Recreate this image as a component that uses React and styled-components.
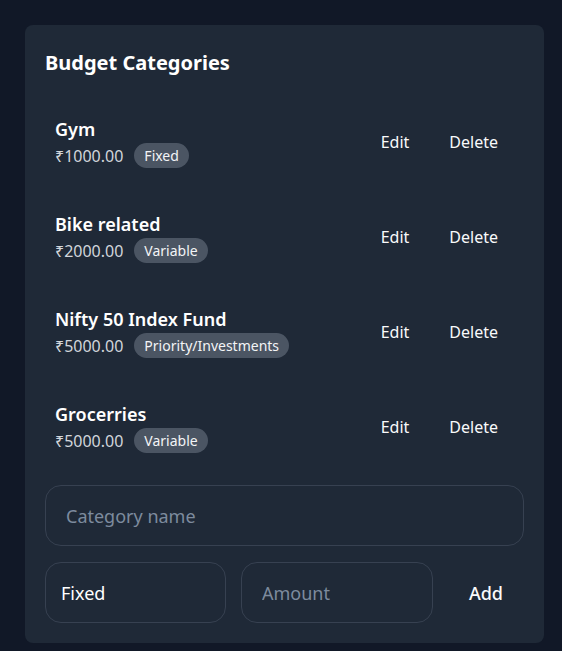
import React from "react"
import styled, { createGlobalStyle } from "styled-components"

const Global = createGlobalStyle`
  html, body {
    margin: 0;
    background: #111827;
    font-family: "Noto Sans", "Open Sans", sans-serif;
    color: #f9fafb;
  }
`

const Page = styled.main`
  padding: 25px;
  min-height: 100vh;
  box-sizing: border-box;
`

const Card = styled.section`
  width: 519px;
  box-sizing: border-box;
  background: #1f2937;
  border-radius: 8px;
  padding: 24px 20px 20px;
`

const Title = styled.h2`
  margin: 0 0 21px;
  font-size: 20px;
  line-height: 28px;
  font-weight: 700;
  color: #ffffff;
`

const List = styled.ul`
  list-style: none;
  margin: 0 0 15px;
  padding: 0;
  display: flex;
  flex-direction: column;
  gap: 8px;
`

const Row = styled.li`
  display: flex;
  align-items: center;
  justify-content: space-between;
  padding: 17px 10px;
`

const Name = styled.div`
  font-size: 18px;
  line-height: 28px;
  font-weight: 600;
  color: #ffffff;
`

const Meta = styled.div`
  display: flex;
  align-items: center;
  gap: 11px;
  height: 25px;
`

const Amount = styled.span`
  font-size: 16px;
  line-height: 24px;
  color: #d1d5db;
`

const Badge = styled.span`
  display: inline-flex;
  align-items: center;
  height: 25px;
  padding: 0 10px;
  border-radius: 999px;
  background: #4b5563;
  color: #f3f4f6;
  font-size: 14px;
`

const Actions = styled.div`
  display: flex;
  gap: 8px;
`

const TextButton = styled.button`
  background: none;
  border: none;
  color: #f9fafb;
  font-family: inherit;
  font-size: ${(p) => (p.$strong ? "18px" : "16px")};
  font-weight: ${(p) => (p.$strong ? 500 : 400)};
  padding: ${(p) => (p.$strong ? "0 21px" : "4px 16px")};
  cursor: pointer;
`

const Form = styled.form`
  display: flex;
  flex-direction: column;
  gap: 16px;
`

const FieldRow = styled.div`
  display: flex;
  gap: 15px;
`

const Field = styled.input`
  box-sizing: border-box;
  height: 61px;
  width: 100%;
  flex: ${(p) => (p.$grow ? "1" : "none")};
  min-width: 0;
  background: #1f2937;
  border: 1px solid #374151;
  border-radius: 16px;
  padding: 0 20px;
  font-family: inherit;
  font-size: 18px;
  color: #f9fafb;
  outline: none;

  &::placeholder {
    color: #7d8b9e;
  }
`

const Select = styled.div`
  box-sizing: border-box;
  width: 181px;
  flex: none;
  height: 61px;
  display: flex;
  align-items: center;
  border: 1px solid #374151;
  border-radius: 16px;
  padding: 0 15px;
  font-size: 18px;
  color: #ffffff;
`

const categories = [
  { name: "Gym", amount: "₹1000.00", type: "Fixed" },
  { name: "Bike related", amount: "₹2000.00", type: "Variable" },
  { name: "Nifty 50 Index Fund", amount: "₹5000.00", type: "Priority/Investments" },
  { name: "Grocerries", amount: "₹5000.00", type: "Variable" },
]

const App = () => (
  <Page>
    <Global />
    <Card>
      <Title>Budget Categories</Title>
      <List>
        {categories.map((c) => (
          <Row key={c.name}>
            <div>
              <Name>{c.name}</Name>
              <Meta>
                <Amount>{c.amount}</Amount>
                <Badge>{c.type}</Badge>
              </Meta>
            </div>
            <Actions>
              <TextButton type="button">Edit</TextButton>
              <TextButton type="button">Delete</TextButton>
            </Actions>
          </Row>
        ))}
      </List>
      <Form onSubmit={(e) => e.preventDefault()}>
        <Field placeholder="Category name" />
        <FieldRow>
          <Select>Fixed</Select>
          <Field $grow placeholder="Amount" />
          <TextButton type="submit" $strong>Add</TextButton>
        </FieldRow>
      </Form>
    </Card>
  </Page>
)

export default App
